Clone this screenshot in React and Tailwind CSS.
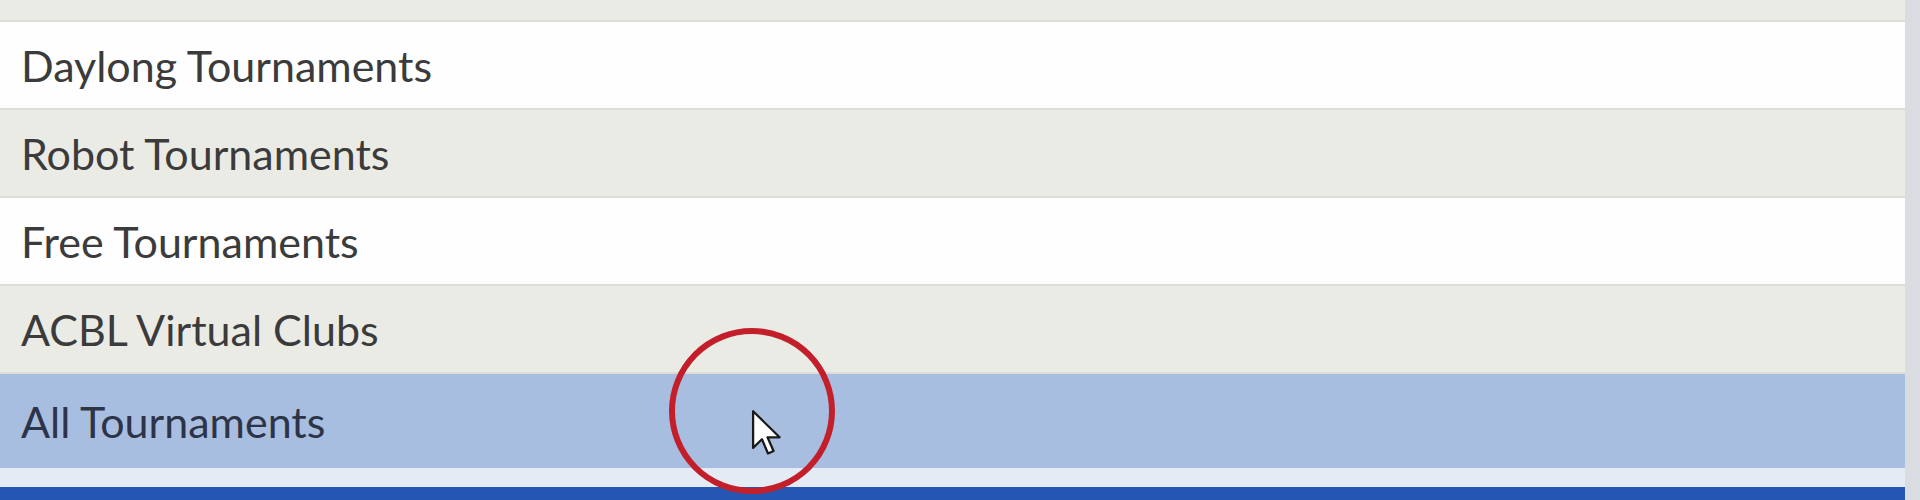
import React from 'react';

const rows = [
  { label: 'Daylong Tournaments', bg: 'bg-[#fefefe]' },
  { label: 'Robot Tournaments', bg: 'bg-[#ebebe6]' },
  { label: 'Free Tournaments', bg: 'bg-[#fefefe]' },
  { label: 'ACBL Virtual Clubs', bg: 'bg-[#ebebe6]' },
];

function Cursor() {
  return (
    <svg width="32" height="48" viewBox="0 0 12 19" className="absolute left-[751px] top-[410px]">
      <path d="M0.5 0.5 L0.5 15 L4 11.6 L6.4 17.2 L8.6 16.2 L6.2 10.8 L11 10.8 Z" fill="#ffffff" stroke="#1a1a1a" strokeWidth="0.9" strokeLinejoin="round" />
    </svg>
  );
}

export default function App() {
  return (
    <div className="relative h-[500px] w-[1920px] overflow-hidden bg-[#d9dce1]" style={{ fontFamily: 'Lato, "Open Sans", sans-serif' }}>
      <div className="w-[1905px] flex flex-col">
        {/* row above, scrolled almost out of view */}
        <div className="h-[22px] border-b-2 border-[#dddcd6] bg-[#ebebe6] flex items-end pl-[21px] pb-[16px] overflow-hidden">
          <span className="text-[43px] text-[#3b3b3b] leading-none">Instant Tournaments</span>
        </div>
        {rows.map((r) => (
          <div key={r.label} className={`h-[88px] border-b-2 border-[#dddcd6] flex items-center pl-[21px] ${r.bg}`}>
            <span className="text-[43px] text-[#3b3b3b] leading-none">{r.label}</span>
          </div>
        ))}
        <div className="h-[94px] bg-[#a8bee1] flex items-center pl-[21px]">
          <span className="text-[43px] text-[#2e3447] leading-none">All Tournaments</span>
        </div>
        <div className="h-[19px] bg-[#e5ebf5]" />
        <div className="h-[20px] bg-[#2456b3]" />
      </div>
      <div className="absolute left-[669px] top-[328px] w-[166px] h-[166px] rounded-full border-[6px] border-[#c21f2b]" />
      <Cursor />
    </div>
  );
}
